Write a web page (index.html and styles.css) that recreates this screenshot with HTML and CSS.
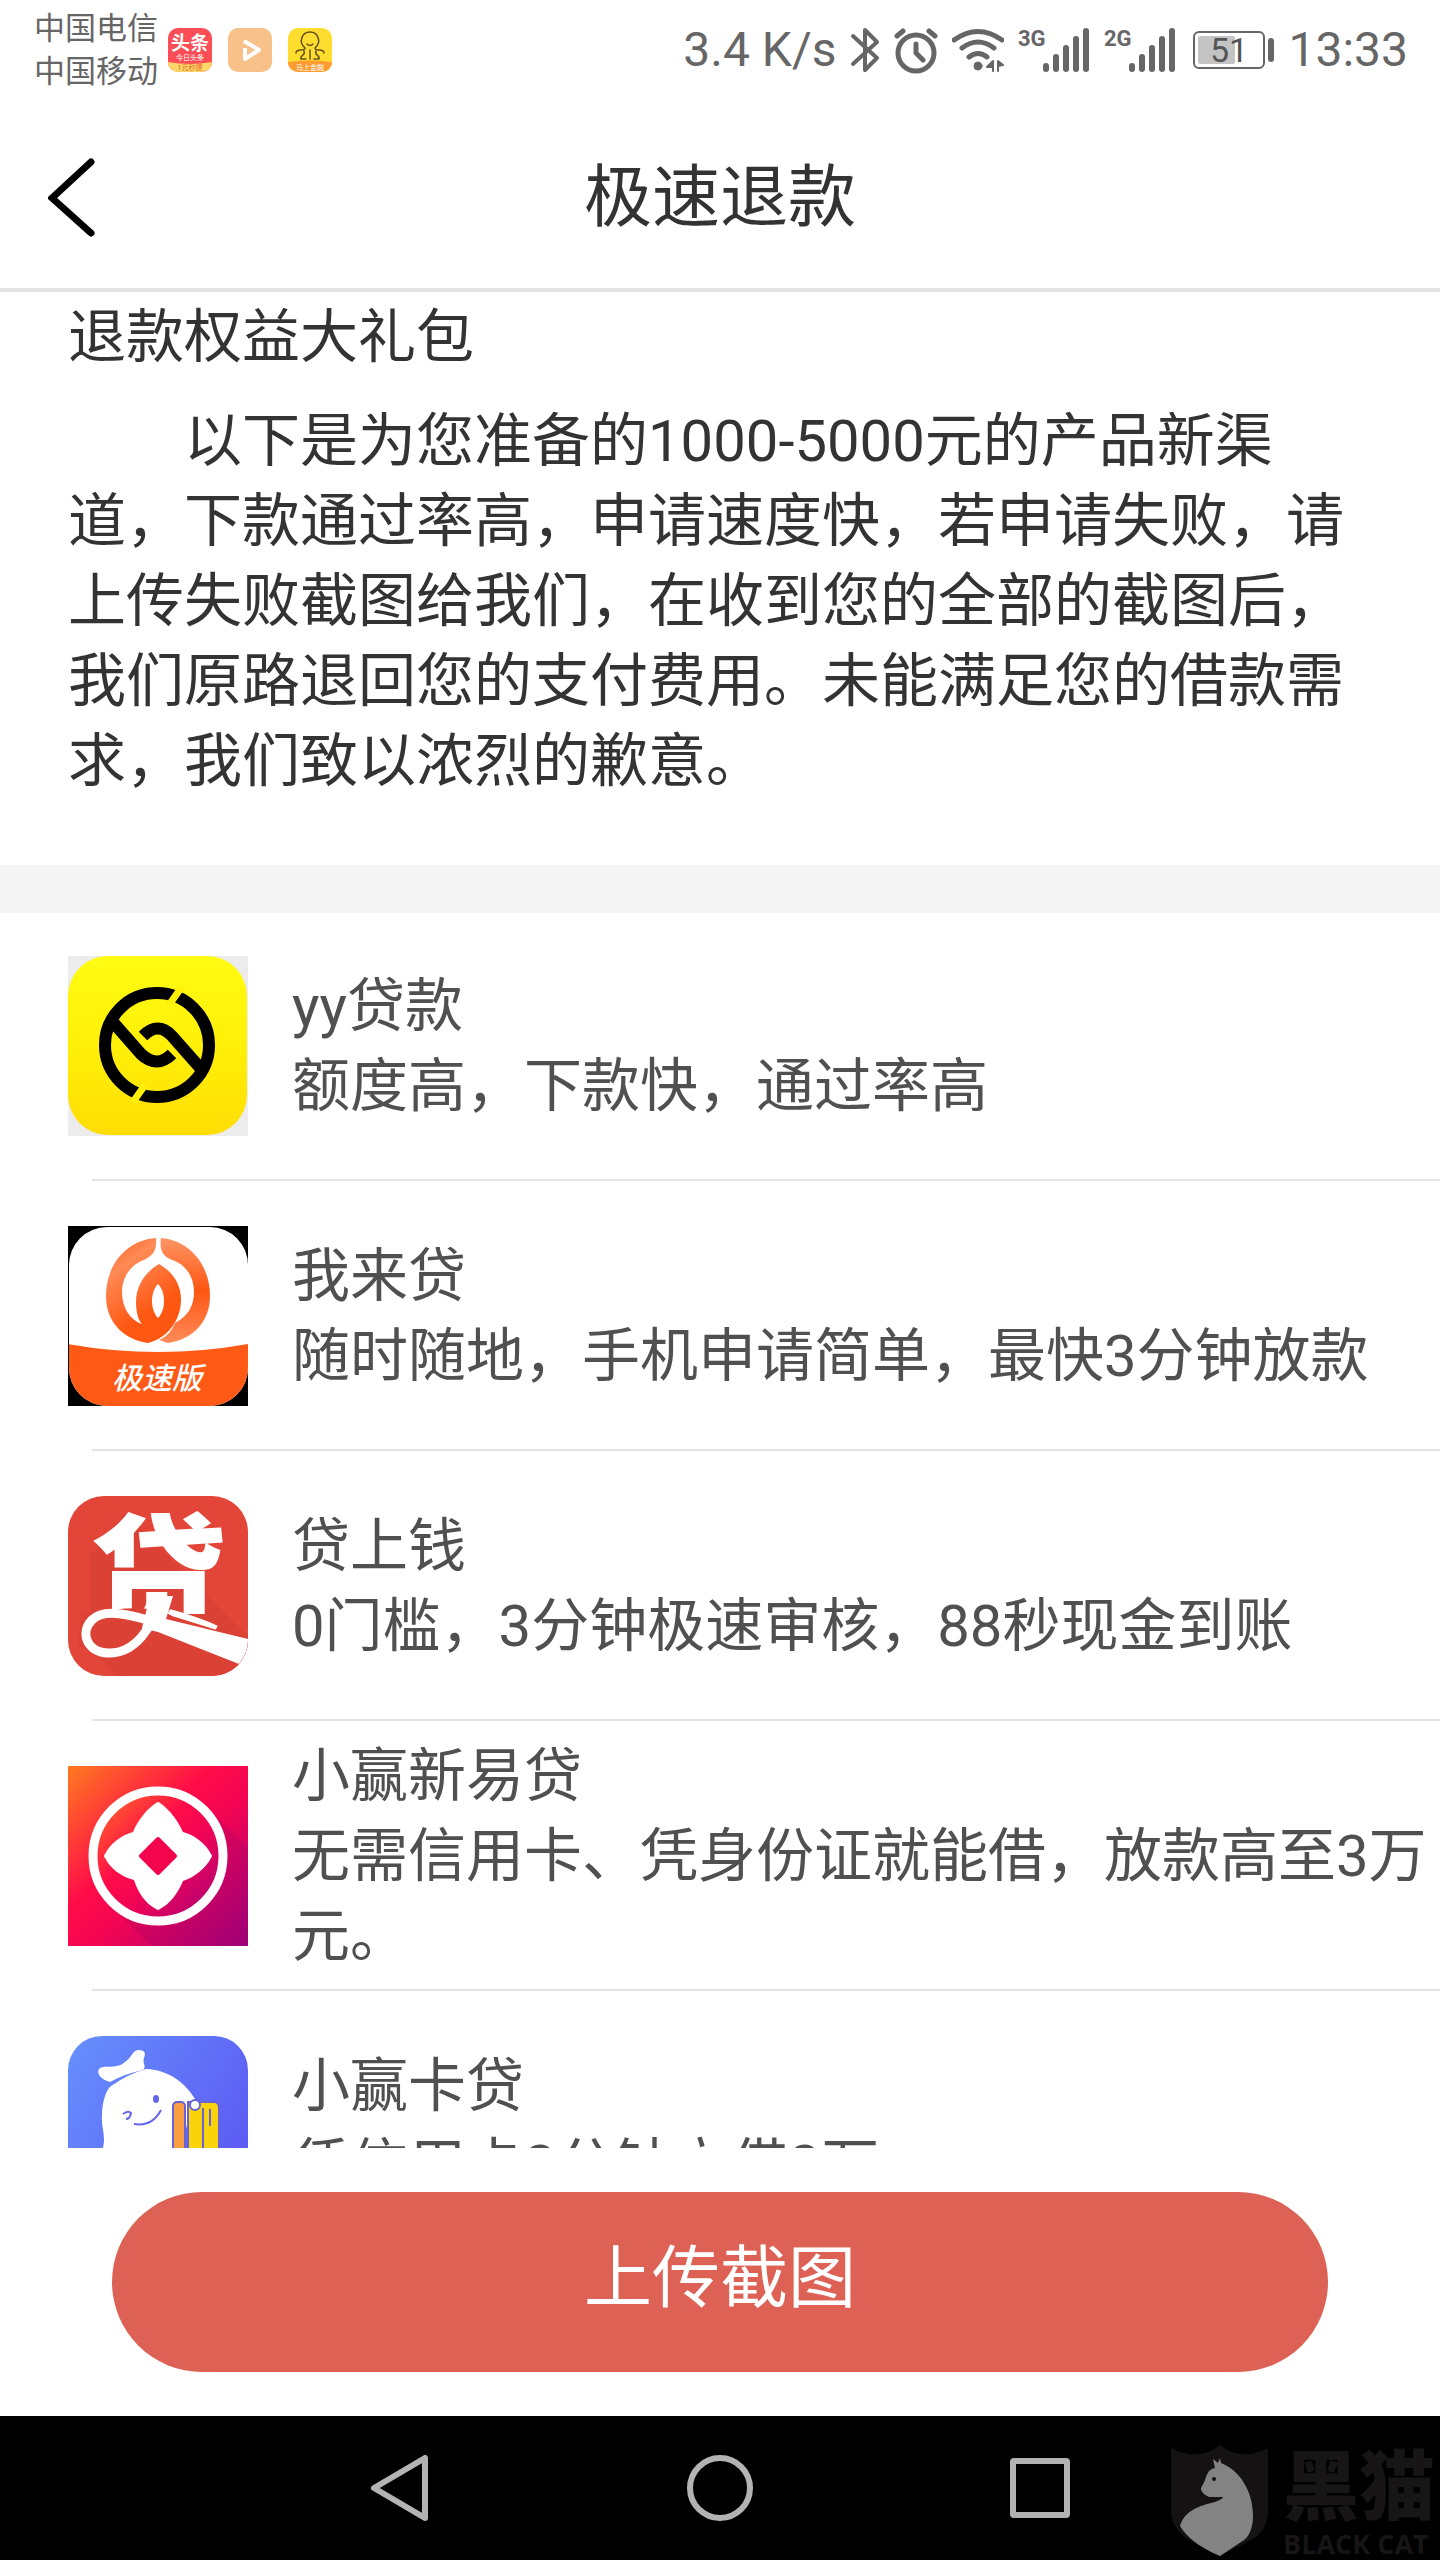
FILE: index.html
```
<!DOCTYPE html>
<html lang="zh-CN">
  <head>
    <meta charset="UTF-8" />
    <meta name="viewport" content="width=device-width, initial-scale=1.0" />
    <title>极速退款</title>
    <link rel="stylesheet" href="styles.css">
  </head>
  <body>
    <div class="status-bar">
      <div class="carriers">
        <span>中国电信</span>
        <span>中国移动</span>
      </div>
      <div class="notifications">
        <svg width="44" height="44" viewBox="0 0 44 44">
          <defs>
            <clipPath id="noteClip"><rect width="44" height="44" rx="10" /></clipPath>
          </defs>
          <g clip-path="url(#noteClip)">
            <rect width="44" height="44" fill="#fb4d55" />
            <path d="M0 34Q22 38 44 34V44H0z" fill="#fdd667" />
          </g>
          <text x="22" y="22" class="mini-title">头条</text>
          <text x="22" y="32" class="mini-text">今日头条</text>
          <text x="22" y="42" class="mini-text mini-red">1元秒提</text>
        </svg>
        <svg width="44" height="44" viewBox="0 0 44 44">
          <rect width="44" height="44" rx="10" fill="#f8c189" />
          <path d="M17 20V31L31 22L16 13" fill="none" stroke="#fff" stroke-width="4" stroke-linejoin="round" />
        </svg>
        <svg width="44" height="44" viewBox="0 0 44 44">
          <g clip-path="url(#noteClip)">
            <rect width="44" height="44" fill="#fedd2e" />
            <path d="M0 34Q22 31 44 34V44H0z" fill="#fd9c33" />
          </g>
          <g fill="none" stroke="#65501c" stroke-width="1.5" stroke-linecap="round">
            <path d="M17 20C10 14 14 4 22 4S34 14 27 20C27 24 36 20 36 25M17 20C17 24 8 20 8 25M16 23C18 28 12 26 13 31H18M28 23C26 28 32 26 31 31H26M22 22V31" />
            <path d="M19 16Q22 19 25 16" />
          </g>
          <text x="22" y="42" class="mini-text">马上金融</text>
        </svg>
      </div>
      <div class="indicators">
        <span>3.4 K/s</span>
        <svg width="30" height="48" viewBox="0 0 30 48" class="line-icon">
          <path d="M3 10L27 32L15 44V4L27 16L3 38" stroke-width="4" />
        </svg>
        <svg width="44" height="48" viewBox="0 0 44 48" class="line-icon">
          <circle cx="22" cy="27" r="18" stroke-width="5" />
          <path d="M22 18V27L29 34M3 10L9 5M41 10L35 5" stroke-width="5" />
        </svg>
        <svg width="52" height="48" viewBox="0 0 52 48" class="line-icon">
          <path d="M2 14Q26-3 50 14M10 22Q26 10 42 22M17 31Q26 24 35 31" stroke-width="5" />
          <circle cx="26" cy="40" r="4" class="solid" />
          <path d="M35 41L41 35V45V41ZM46 35V45V40L51 39Z" stroke-width="2" class="solid" />
        </svg>
        <svg width="72" height="48" viewBox="0 0 72 48" class="line-icon">
          <text x="0" y="20" class="network">3G</text>
          <path d="M28 40V43M38 31V43M48 22V43M58 13V43M68 5V43" stroke-width="6" />
        </svg>
        <svg width="72" height="48" viewBox="0 0 72 48" class="line-icon">
          <text x="0" y="20" class="network">2G</text>
          <path d="M28 40V43M38 31V43M48 22V43M58 13V43M68 5V43" stroke-width="6" />
        </svg>
        <svg width="84" height="48" viewBox="0 0 84 48" class="line-icon">
          <rect x="4" y="6" width="70" height="36" rx="5" stroke-width="2" />
          <rect x="8" y="10" width="37" height="28" rx="2" class="charge" />
          <path d="M81 15V33" stroke-width="6" />
          <text x="39" y="36" class="battery">51</text>
        </svg>
        <span>13:33</span>
      </div>
    </div>

    <header class="title-bar">
      <button class="back" aria-label="返回">
        <svg width="50" height="82" viewBox="0 0 50 82">
          <path d="M43 5L4 41L43 76" fill="none" stroke="#000" stroke-width="7" stroke-linecap="round" />
        </svg>
      </button>
      <h1>极速退款</h1>
    </header>

    <main class="content">
      <section class="intro">
        <h2>退款权益大礼包</h2>
        <p>以下是为您准备的1000-5000元的产品新渠道，下款通过率高，申请速度快，若申请失败，请上传失败截图给我们，在收到您的全部的截图后，我们原路退回您的支付费用。未能满足您的借款需求，我们致以浓烈的歉意。</p>
      </section>

      <ul class="loans">
        <li class="loan">
          <svg class="logo" viewBox="0 0 180 180">
            <defs>
              <linearGradient id="yellow" x2="0" y2="1">
                <stop stop-color="#fffb12" />
                <stop offset=".5" stop-color="#fff008" />
                <stop offset="1" stop-color="#ffdd04" />
              </linearGradient>
            </defs>
            <rect width="180" height="180" fill="#ececec" />
            <rect width="179" height="179" rx="40" fill="url(#yellow)" />
            <g fill="none" stroke="#000" stroke-width="12">
              <circle cx="89" cy="89" r="52" />
              <path d="M44 65L73 98Q89 113 104 98M134 114L104 80Q90 65 75 80" />
            </g>
            <path d="M113 32L101 49M77 129L65 146" stroke="#fff00a" stroke-width="7" />
          </svg>
          <div class="loan-text">
            <h3>yy贷款</h3>
            <p>额度高，下款快，通过率高</p>
          </div>
        </li>
        <li class="loan">
          <svg class="logo" viewBox="0 0 180 180">
            <defs>
              <clipPath id="round"><rect width="179" height="179" x="1" y="1" rx="38" /></clipPath>
              <linearGradient id="petal" x1="0" y1="0" x2=".5" y2="1">
                <stop stop-color="#fb5a18" />
                <stop offset=".3" stop-color="#ff8a56" />
                <stop offset=".8" stop-color="#fd5712" />
              </linearGradient>
              <linearGradient id="petalRight" x1="0" y1="0" x2="0" y2="1">
                <stop stop-color="#ff9564" />
                <stop offset=".5" stop-color="#fd5712" />
                <stop offset="1" stop-color="#ff8b5a" />
              </linearGradient>
            </defs>
            <rect width="180" height="180" />
            <g clip-path="url(#round)">
              <rect width="180" height="180" fill="#fff" />
              <path d="M0 118Q90 134 180 118V180H0z" fill="#fe5a16" />
            </g>
            <path d="M93 12C120 14 142 37 142 70C142 98 122 114 100 117L91 114C100 110 104 104 107 97C120 90 126 80 126 66C126 50 117 38 104 34C96 30 91 26 93 12Z" fill="url(#petalRight)" />
            <path fill-rule="evenodd" d="M88 12C60 14 38 37 38 70C38 98 58 114 80 117C98 113 113 95 113 74C113 56 103 45 91 38C79 45 68 58 68 76C68 86 70 94 74 98C62 94 54 82 54 66C54 50 64 38 76 34C84 30 89 26 88 12ZM90 58C98 66 98 84 90 92C82 84 82 66 90 58Z" fill="url(#petal)" />
            <text x="89" y="163" class="logo-caption">极速版</text>
          </svg>
          <div class="loan-text">
            <h3>我来贷</h3>
            <p>随时随地，手机申请简单，最快3分钟放款</p>
          </div>
        </li>
        <li class="loan">
          <svg class="logo" viewBox="0 0 180 180">
            <defs>
              <clipPath id="redClip"><rect width="180" height="180" rx="36" /></clipPath>
            </defs>
            <g clip-path="url(#redClip)">
              <rect width="180" height="180" fill="#e34639" />
              <path d="M57 17L180 140V180H48L22 150V60z" fill="#dc4136" />
              <text x="90" y="133" class="logo-word">贷</text>
              <path d="M20 117Q84 106 104 120L184 145V182L90 136Q70 164 42 162L10 150L14 116z" fill="#dc4136" />
              <path d="M92 100C86 132 66 158 40 157C18 156 12 136 24 124C36 112 62 118 92 128" fill="none" stroke="#fff" stroke-width="9" />
              <path d="M82 100H105L98 123L180 143V156L171 168L90 136L74 132z" fill="#fff" />
            </g>
          </svg>
          <div class="loan-text">
            <h3>贷上钱</h3>
            <p>0门槛，3分钟极速审核，88秒现金到账</p>
          </div>
        </li>
        <li class="loan">
          <svg class="logo" viewBox="0 0 180 180">
            <defs>
              <linearGradient id="sunset" x2="1" y2="1">
                <stop stop-color="#ff7a20" />
                <stop offset=".4" stop-color="#ff0c48" />
                <stop offset=".58" stop-color="#f20454" />
                <stop offset="1" stop-color="#a2007c" />
              </linearGradient>
            </defs>
            <rect width="180" height="180" fill="url(#sunset)" />
            <path d="M140 42L180 82V180H84L42 140z" fill="#900068" opacity=".2" />
            <circle cx="90" cy="90" r="65" fill="url(#sunset)" stroke="#fff" stroke-width="9" />
            <path d="M88 37Q90 35 92 37C102 44 110 55 115 66C127 69 138 78 143 88Q145 90 143 92C138 102 127 111 115 115C110 127 102 138 92 143Q90 145 88 143C78 138 70 127 66 114C53 111 42 102 37 92Q35 90 37 88C42 78 53 69 65 66C70 54 78 44 88 37Z" fill="#fff" />
            <path d="M90 73L107 90L90 107L73 90z" fill="#f4044d" stroke="#f4044d" stroke-width="4" stroke-linejoin="round" />
          </svg>
          <div class="loan-text">
            <h3>小赢新易贷</h3>
            <p>无需信用卡、凭身份证就能借，放款高至3万元。</p>
          </div>
        </li>
        <li class="loan">
          <svg class="logo" viewBox="0 0 180 180">
            <defs>
              <linearGradient id="blue" x2="1" y2=".6">
                <stop stop-color="#6690fd" />
                <stop offset="1" stop-color="#5d5bf3" />
              </linearGradient>
            </defs>
            <rect width="180" height="180" rx="34" fill="url(#blue)" />
            <path d="M42 46C34 44 28 38 31 33C36 28 48 34 57 26C65 20 64 15 70 14C77 14 78 17 76 22C74 27 79 31 75 34Q56 38 42 46Z" fill="#fff" />
            <path d="M35 180V112C38 98 33 92 34 80C34 66 38 54 43 50Q60 38 78 33C102 34 118 48 127 63L112 112V180z" fill="#fff" />
            <g stroke="#6a63d8" stroke-width="2">
              <rect x="105" y="66" width="12" height="104" rx="4" fill="#fb9e41" />
              <path d="M120 180V66H146Q151 66 151 72V180z" fill="#fbd30b" />
              <path d="M135 72V180M142 73V90" />
            </g>
            <circle cx="127" cy="69" r="5" fill="#fff" stroke="#6a63d8" stroke-width="2" />
            <ellipse cx="88" cy="63" rx="3" ry="4" fill="#6565e8" />
            <path d="M66 88Q84 91 93 74M55 78Q60 74 63 77Q62 83 58 83" fill="none" stroke="#6565e8" stroke-width="2" />
          </svg>
          <div class="loan-text">
            <h3>小赢卡贷</h3>
            <p>凭信用卡3分钟立借3万</p>
          </div>
        </li>
      </ul>
    </main>

    <footer class="upload">
      <button class="upload-btn">上传截图</button>
    </footer>

    <nav class="nav-bar">
      <button aria-label="返回键">
        <svg width="72" height="72" viewBox="0 0 72 72"><path d="M61 6V66L10 36z" /></svg>
      </button>
      <button aria-label="主屏幕">
        <svg width="72" height="72" viewBox="0 0 72 72"><circle cx="36" cy="36" r="30" /></svg>
      </button>
      <button aria-label="最近任务">
        <svg width="72" height="72" viewBox="0 0 72 72"><rect x="9" y="9" width="54" height="54" rx="1" /></svg>
      </button>
      <div class="watermark">
        <svg width="98" height="114" viewBox="0 0 98 114">
          <path d="M0 4Q28 18 49 1Q70 18 97 4V66Q97 88 78 97L49 112L20 97Q0 86 0 66z" fill="#141213" />
          <path d="M42 15L47 19L49 14L50 19C68 26 82 46 82 72C82 84 78 94 70 98L49 112C30 104 16 94 9 82C14 66 28 62 44 58Q52 55 52 53H38C32 50 28 46 31 42C36 36 34 26 44 24z" fill="#838383" />
          <circle cx="43" cy="35" r="2" fill="#141213" />
        </svg>
        <div class="watermark-text">
          <strong>黑猫</strong>
          <span>BLACK CAT</span>
        </div>
      </div>
    </nav>
  </body>
</html>
```
FILE: styles.css
```
* {
  box-sizing: border-box;
  margin: 0;
  padding: 0;
}
body {
  display: flex;
  flex-direction: column;
  height: 100vh;
  overflow: hidden;
  background-color: #fff;
  color: #333;
  font-family: Roboto, "Noto Sans CJK SC", sans-serif;
  font-size: 58px;
  line-height: 80px;
}
h1,
h2,
h3 {
  font-size: inherit;
  font-weight: 400;
}
button {
  border: none;
  background: none;
  font-family: inherit;
  cursor: pointer;
}
svg {
  display: block;
  flex-shrink: 0;
}

/* status bar */
.status-bar {
  display: flex;
  align-items: center;
  height: 100px;
  padding: 0 32px 0 34px;
  color: #666;
}
.carriers {
  display: flex;
  flex-direction: column;
  font-size: 31px;
  line-height: 43px;
}
.notifications {
  display: flex;
  gap: 16px;
  margin-left: 10px;
}
.indicators {
  display: flex;
  align-items: center;
  gap: 14px;
  margin-left: auto;
  font-size: 48px;
  line-height: 60px;
}
.line-icon {
  fill: none;
  stroke: #666;
  stroke-linecap: round;
  stroke-linejoin: round;
}
.line-icon text {
  fill: #666;
  stroke: none;
}
.line-icon .solid {
  fill: #666;
}
.line-icon .charge {
  fill: #c4c4c4;
  stroke: none;
}
.network {
  font-size: 22px;
  font-weight: 700;
}
.line-icon .battery {
  font-size: 34px;
  text-anchor: middle;
  fill: #555;
}
.mini-title {
  font-size: 19px;
  font-weight: 700;
  text-anchor: middle;
  fill: #fff;
}
.mini-text {
  font-size: 7px;
  text-anchor: middle;
  fill: #fff;
}
.mini-red {
  fill: #e0652d;
}

/* title bar */
.title-bar {
  display: grid;
  grid-template-columns: 1fr auto 1fr;
  align-items: center;
  height: 192px;
  padding-top: 8px;
  border-bottom: 4px solid #e3e3e3;
}
.title-bar h1 {
  font-size: 68px;
}
.back {
  justify-self: start;
  padding: 0 48px;
}

/* content */
.content {
  flex: 1;
  min-height: 0;
  overflow: hidden;
}
.intro {
  padding: 5px 68px 64px;
  border-bottom: 48px solid #f5f5f5;
}
.intro p {
  margin-top: 24px;
  text-indent: 2em;
}
.loans {
  list-style: none;
}
.loan {
  display: flex;
  align-items: center;
  gap: 44px;
  position: relative;
  height: 270px;
  padding: 0 0 4px 68px;
  color: #505050;
}
/* divider starts a little right of the row edge */
.loan::after {
  content: "";
  position: absolute;
  left: 92px;
  right: 0;
  bottom: 2px;
  border-bottom: 2px solid #e3e3e3;
}
.logo {
  width: 180px;
  height: 180px;
}
.logo-caption {
  font-size: 30px;
  font-style: italic;
  font-weight: 500;
  text-anchor: middle;
  fill: #fff;
}
.logo-word {
  font-size: 136px;
  font-weight: 900;
  text-anchor: middle;
  fill: #fff;
}

/* upload button */
.upload {
  padding: 44px 112px;
}
.upload-btn {
  display: block;
  width: 100%;
  height: 180px;
  padding-bottom: 20px;
  border-radius: 90px;
  background-color: #dd6154;
  color: #fff;
  font-size: 68px;
}

/* system navigation */
.nav-bar {
  display: flex;
  justify-content: center;
  position: relative;
  height: 144px;
  background-color: #000;
}
.nav-bar button {
  display: flex;
  align-items: center;
  justify-content: center;
  width: 320px;
}
.nav-bar button svg {
  fill: none;
  stroke: #b3b3b3;
  stroke-width: 6;
  stroke-linejoin: round;
}
.watermark {
  display: flex;
  align-items: flex-end;
  gap: 14px;
  position: absolute;
  right: 0;
  bottom: 2px;
  color: #171516;
}
.watermark-text {
  display: flex;
  flex-direction: column;
  width: 157px;
}
.watermark-text strong {
  font-size: 76px;
  font-weight: 900;
  line-height: 84px;
}
.watermark-text span {
  font-family: "Open Sans", sans-serif;
  font-size: 27px;
  font-weight: 700;
  line-height: 28px;
  white-space: nowrap;
}
```
